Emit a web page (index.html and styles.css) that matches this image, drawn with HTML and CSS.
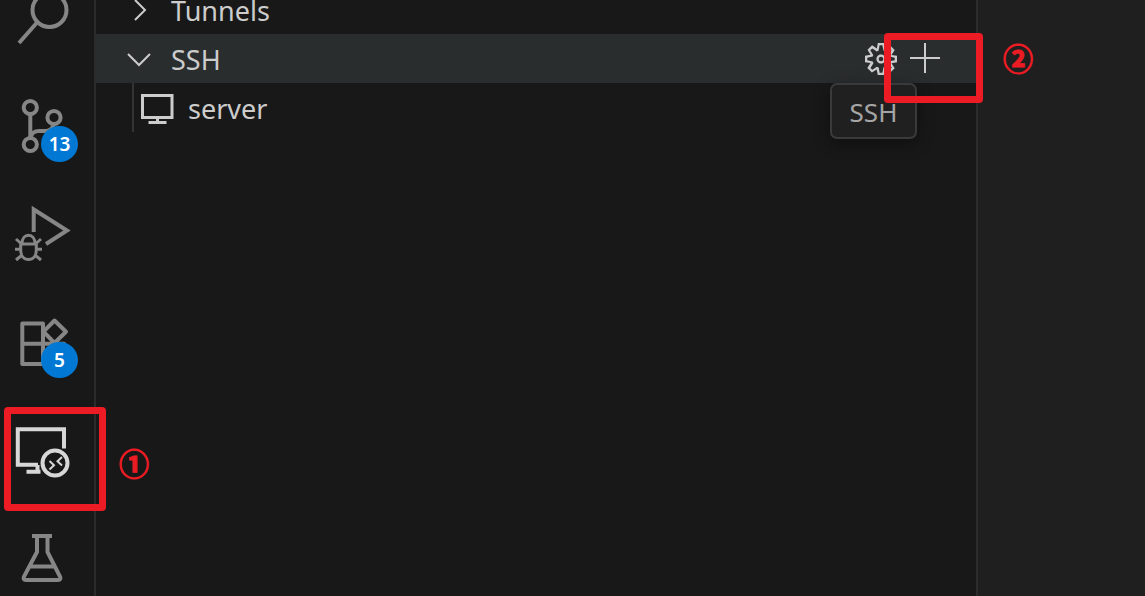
FILE: index.html
```
<!DOCTYPE html>
<html lang="en">
<head>
  <meta charset="UTF-8">
  <meta name="viewport" content="width=device-width, initial-scale=1.0">
  <title>Remote Explorer</title>
  <link rel="stylesheet" href="styles.css">
</head>
<body>

  <nav class="activity-bar">
    <button class="activity" aria-label="Search">
      <svg viewBox="0 0 94 108">
        <circle cx="49.5" cy="46" r="17"/>
        <path d="M37.5 58L19 79"/>
      </svg>
    </button>

    <button class="activity" aria-label="Source Control">
      <svg viewBox="0 0 94 108">
        <circle cx="30.3" cy="35.5" r="6.6"/>
        <circle cx="54" cy="45.5" r="6.6"/>
        <circle cx="30.3" cy="72.5" r="6.6"/>
        <path d="M30.3 42V66M54 52Q52 59 45 59H39Q32 59 30.3 66"/>
      </svg>
      <span class="badge">13</span>
    </button>

    <button class="activity" aria-label="Run and Debug">
      <svg viewBox="0 0 94 108">
        <path d="M33.7 52V29.5L67 50.5L46 64"/>
        <path class="bug" d="M20.7 64V70C20.7 76 24 79.5 28.5 79.5S36.3 76 36.3 70V64ZM22 64C22 58 25 55.3 28.5 55.3S35 58 35 64M15 69.3H20M37 69.3H42M16 59L21 63.5M41 59L36 63.5M16 80L22 75M41 80L35 75"/>
      </svg>
    </button>

    <button class="activity" aria-label="Extensions">
      <svg viewBox="0 0 94 108">
        <path d="M22.3 35.5H43V76H22.3ZM22.3 55.7H64V76H43M54.5 32.5L66 43.7L54.5 55L43.5 43.7Z" stroke-linejoin="round"/>
      </svg>
      <span class="badge">5</span>
    </button>

    <div class="activity-item">
      <button class="activity active" aria-label="Remote Explorer">
        <svg viewBox="0 0 94 108">
          <path d="M64 52.5V33.2H17.8V68.7H38M26.5 75.7H40.5M37.5 69V75"/>
          <circle cx="55" cy="67" r="12.5"/>
          <path class="thin" d="M49.5 65L54 69.2L49.5 73.5M62 61L57.5 65.2L62 69.5"/>
        </svg>
      </button>
      <div class="mark mark-remote"></div>
      <span class="step step-one">①</span>
    </div>

    <button class="activity" aria-label="Testing">
      <svg viewBox="0 0 94 108">
        <path d="M32 32H52M37 32V48L24 72.5Q22.5 76 26 76H58Q61.5 76 60 72.5L47.5 48V32M29 62.5H55"/>
      </svg>
    </button>
  </nav>

  <aside class="sidebar">
    <div class="row">
      <svg class="chevron" viewBox="0 0 24 24"><path d="M8 2L18 12L8 22"/></svg>
      <span class="label">Tunnels</span>
    </div>

    <div class="row selected">
      <svg class="chevron" viewBox="0 0 24 24"><path d="M1 7L12 18L23 7"/></svg>
      <span class="label">SSH</span>
      <div class="actions">
        <button class="action" aria-label="Open SSH config file">
          <svg viewBox="1 1 14 14"><path class="solid" d="M9.1 4.4L8.6 2H7.4l-.5 2.4-.7.3-2-1.3-.9.8 1.3 2-.2.7-2.4.5v1.2l2.4.5.3.8-1.3 2 .8.8 2-1.3.8.3.4 2.3h1.2l.5-2.4.8-.3 2 1.3.8-.8-1.3-2 .3-.8 2.3-.4V7.4l-2.4-.5-.3-.8 1.3-2-.8-.8-2 1.3-.7-.2zM9.4 1l.5 2.4L12 2.1l2 2-1.4 2.1 2.4.4v2.8l-2.4.5L14 12l-2 2-2.1-1.4-.5 2.4H6.6l-.5-2.4L4 13.9l-2-2 1.4-2.1L1 9.4V6.6l2.4-.5L2.1 4l2-2 2.1 1.4.4-2.4h2.8zm.6 7c0 1.1-.9 2-2 2s-2-.9-2-2 .9-2 2-2 2 .9 2 2zM8 9c.6 0 1-.4 1-1s-.4-1-1-1-1 .4-1 1 .4 1 1 1z"/></svg>
        </button>
        <button class="action" aria-label="New remote">
          <svg viewBox="0 0 32 32"><path d="M16 0V30M1 15H31"/></svg>
        </button>
      </div>
      <div class="tooltip" role="tooltip">SSH</div>
      <div class="mark mark-add"></div>
      <span class="step step-two">②</span>
    </div>

    <div class="row child">
      <svg class="monitor" viewBox="0 0 33 32">
        <path d="M1.5 3.5H31V25.5H1.5ZM16.5 26V31M7.5 30.5H25.5"/>
      </svg>
      <span class="label">server</span>
    </div>
  </aside>

  <main class="editor"></main>

</body>
</html>
```
FILE: styles.css
```
* {
  box-sizing: border-box;
}
body {
  margin: 0;
  height: 100vh;
  display: flex;
  overflow: hidden;
  background-color: #181818;
  color: #cccccc;
  font-family: "Noto Sans", "Open Sans", sans-serif;
  font-size: 27px;
}
button {
  padding: 0;
  border: none;
  background: none;
  color: inherit;
  font-family: inherit;
  cursor: pointer;
}
svg {
  display: block;
  fill: none;
  stroke: currentColor;
}

/* activity bar, scrolled down a little */
.activity-bar {
  flex: none;
  width: 96px;
  border-right: 2px solid #2b2b2b;
}
.activity-bar > :first-child {
  margin-top: -36px;
}
.activity {
  position: relative;
  display: block;
  width: 94px;
  height: 108px;
  color: #868686;
}
.activity svg {
  width: 94px;
  height: 108px;
  stroke-width: 4px;
}
.activity .bug {
  stroke-width: 3px;
}
.activity .thin {
  stroke-width: 2px;
}
.activity.active {
  color: #d7d7d7;
}
.activity-item {
  position: relative;
}
.badge {
  position: absolute;
  left: 41px;
  top: 54px;
  width: 37px;
  height: 36px;
  border-radius: 50%;
  background-color: #0078d4;
  color: #ffffff;
  font-size: 19px;
  font-weight: 600;
  line-height: 37px;
  text-align: center;
}

/* sidebar tree */
.sidebar {
  flex: 1;
  min-width: 0;
}
.row {
  position: relative;
  display: flex;
  align-items: center;
  height: 49px;
  padding-left: 31px;
  padding-right: 35px;
}
.row:first-child {
  margin-top: -15px;
}
.row.selected {
  background-color: #2a2d2e;
}
.label {
  padding-top: 2px;
}
.chevron {
  width: 24px;
  height: 24px;
  margin-right: 20px;
  stroke-width: 2px;
}
.child {
  margin-left: 36px;
  padding-left: 7px;
  border-left: 2px solid #333333;
}
.monitor {
  width: 33px;
  height: 32px;
  margin-right: 14px;
  stroke-width: 3px;
}
.actions {
  display: flex;
  gap: 12px;
  margin-left: auto;
}
.action svg {
  width: 32px;
  height: 32px;
  stroke-width: 2px;
}
.action .solid {
  fill: currentColor;
  stroke: none;
}
.tooltip {
  position: absolute;
  right: 59px;
  top: 49px;
  z-index: 1;
  width: 87px;
  height: 56px;
  border: 2px solid #3a3a3a;
  border-radius: 7px;
  background-color: #202020;
  box-shadow: 0 4px 16px rgba(0, 0, 0, 0.4);
  color: #a5a5a5;
  font-size: 26px;
  line-height: 54px;
  text-align: center;
}

.editor {
  flex: none;
  width: 169px;
  border-left: 2px solid #2b2b2b;
  background-color: #1f1f1f;
}

/* red step marks */
.mark {
  position: absolute;
  z-index: 2;
  border: 7px solid #ed1c24;
  border-radius: 4px;
  pointer-events: none;
}
.mark-remote {
  left: 4px;
  top: 11px;
  width: 102px;
  height: 104px;
}
.mark-add {
  right: -7px;
  top: -1px;
  width: 99px;
  height: 70px;
}
.step {
  position: absolute;
  z-index: 2;
  color: #ed1c24;
  font-family: "Noto Sans CJK SC", sans-serif;
  font-size: 30px;
  font-weight: bold;
  line-height: 48px;
  -webkit-text-stroke: 1px #ed1c24;
}
.step-one {
  left: 119px;
  top: 42px;
}
.step-two {
  right: -57px;
  top: -1px;
}
```
